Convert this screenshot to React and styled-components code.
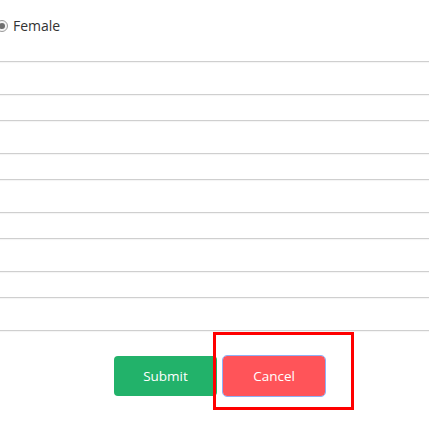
import React from "react";
import styled, { createGlobalStyle } from "styled-components";

const Global = createGlobalStyle`
  html, body { margin: 0; padding: 0; background: #fff; }
  body { font-family: "Open Sans", "Noto Sans", Arial, sans-serif; color: #333; }
`;

const Page = styled.div`
  width: 429px;
  height: 429px;
  overflow: hidden;
  display: flex;
  flex-direction: column;
`;

const RadioRow = styled.label`
  display: flex;
  align-items: center;
  gap: 5px;
  height: 62px;
  margin-left: -4px;
  padding-bottom: 10px;
  box-sizing: border-box;
  border-bottom: 1px solid #cfcfcf;
  box-shadow: 0 1px 1px rgba(0, 0, 0, 0.04);
  font-size: 14px;
  color: #333;
`;

const RadioCircle = styled.span`
  width: 12px;
  height: 12px;
  border-radius: 50%;
  border: 1px solid #9a9a9a;
  background: #f4f4f4;
  box-sizing: border-box;
  display: flex;
  align-items: center;
  justify-content: center;
  &::after {
    content: "";
    width: 6px;
    height: 6px;
    border-radius: 50%;
    background: #6e6e6e;
  }
`;

const Line = styled.div`
  height: ${(p) => p.$h}px;
  box-sizing: border-box;
  border-bottom: 1px solid #cfcfcf;
  box-shadow: 0 1px 1px rgba(0, 0, 0, 0.04);
`;

const ButtonRow = styled.div`
  position: relative;
  display: flex;
  align-items: center;
  gap: 6px;
  padding: 25px 0 0 114px;
`;

const Button = styled.button`
  width: ${(p) => p.$w}px;
  height: 40px;
  border: none;
  border-radius: 4px;
  background: ${(p) => p.$bg};
  color: #fff;
  font-family: "Open Sans", "Noto Sans", Arial, sans-serif;
  font-size: 13.5px;
  cursor: pointer;
  outline: ${(p) => (p.$focus ? "1px solid #8fb0f5" : "none")};
`;

const Highlight = styled.div`
  position: absolute;
  left: 213px;
  top: 1px;
  width: 141px;
  height: 78px;
  box-sizing: border-box;
  border: 3px solid #ff0000;
  pointer-events: none;
`;

const heights = [33, 26, 33, 26, 33, 26, 33, 26, 33];

export default function App() {
  return (
    <Page>
      <Global />
      <RadioRow>
        <RadioCircle />
        Female
      </RadioRow>
      {heights.map((h, i) => (
        <Line key={i} $h={h} />
      ))}
      <ButtonRow>
        <Button $w={103} $bg="#22b26a">Submit</Button>
        <Button $w={102} $bg="#ff5459" $focus>Cancel</Button>
        <Highlight />
      </ButtonRow>
    </Page>
  );
}
